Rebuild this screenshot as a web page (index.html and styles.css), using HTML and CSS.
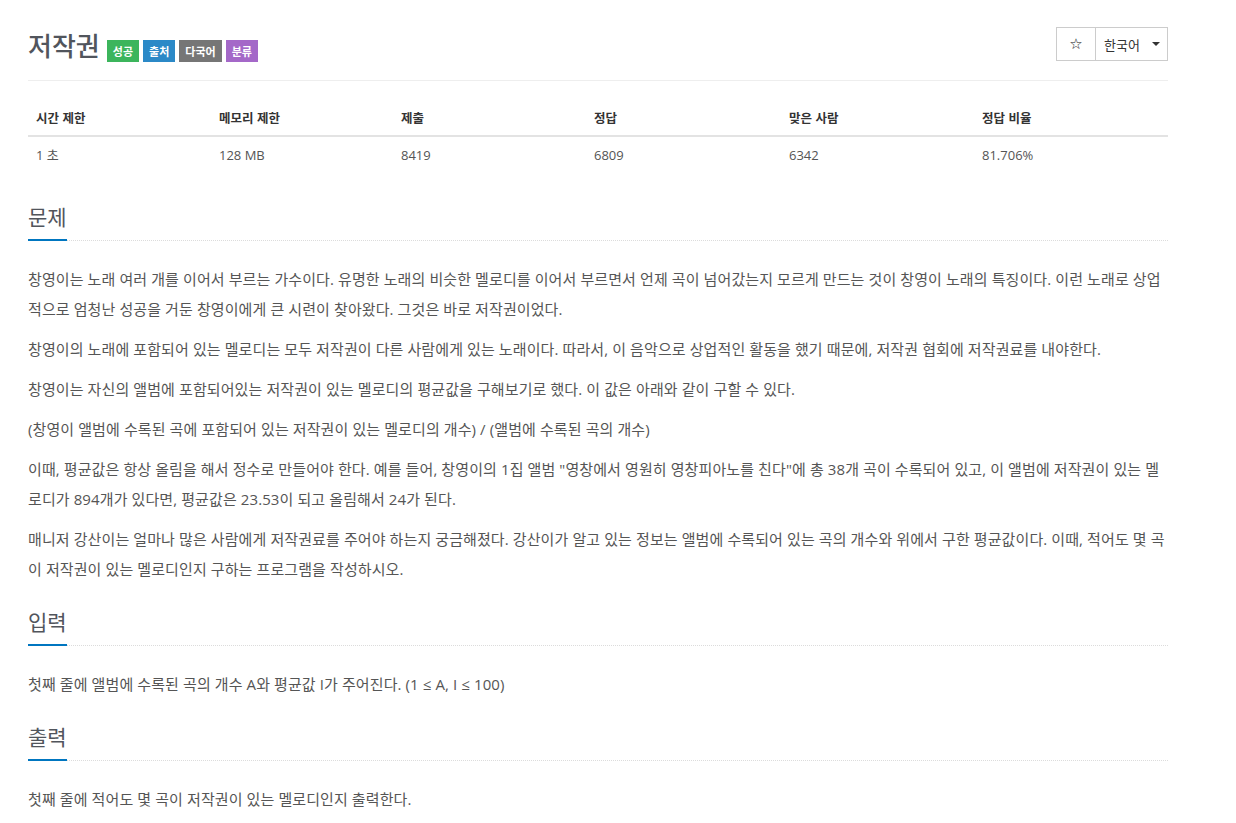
FILE: index.html
```html
<!DOCTYPE html>
<html lang="ko">
<head>
<meta charset="utf-8">
<title>저작권</title>
<link rel="stylesheet" href="styles.css">
</head>
<body>
<div class="page">
  <div class="page-header">
    <h1 class="title-line">
      <span class="title">저작권</span>
      <span class="badges">
        <span class="badge badge-green">성공</span>
        <span class="badge badge-blue">출처</span>
        <span class="badge badge-gray">다국어</span>
        <span class="badge badge-purple">분류</span>
      </span>
    </h1>
    <div class="btn-group">
      <button class="btn btn-star" type="button">☆</button>
      <button class="btn btn-lang" type="button">한국어 <span class="caret"></span></button>
    </div>
  </div>

  <table class="info-table">
    <thead>
      <tr>
        <th class="c1">시간 제한</th>
        <th class="c2">메모리 제한</th>
        <th class="c3">제출</th>
        <th class="c4">정답</th>
        <th class="c5">맞은 사람</th>
        <th class="c6">정답 비율</th>
      </tr>
    </thead>
    <tbody>
      <tr>
        <td>1 초 </td>
        <td>128 MB</td>
        <td>8419</td>
        <td>6809</td>
        <td>6342</td>
        <td>81.706%</td>
      </tr>
    </tbody>
  </table>

  <section class="problem-section first">
    <div class="headline"><h2>문제</h2></div>
    <div class="problem-text">
      <p>창영이는 노래 여러 개를 이어서 부르는 가수이다. 유명한 노래의 비슷한 멜로디를 이어서 부르면서 언제 곡이 넘어갔는지 모르게 만드는 것이 창영이 노래의 특징이다. 이런 노래로 상업적으로 엄청난 성공을 거둔 창영이에게 큰 시련이 찾아왔다. 그것은 바로 저작권이었다.</p>
      <p>창영이의 노래에 포함되어 있는 멜로디는 모두 저작권이 다른 사람에게 있는 노래이다. 따라서, 이 음악으로 상업적인 활동을 했기 때문에, 저작권 협회에 저작권료를 내야한다.</p>
      <p>창영이는 자신의 앨범에 포함되어있는 저작권이 있는 멜로디의 평균값을 구해보기로 했다. 이 값은 아래와 같이 구할 수 있다.</p>
      <p>(창영이 앨범에 수록된 곡에 포함되어 있는 저작권이 있는 멜로디의 개수) / (앨범에 수록된 곡의 개수)</p>
      <p>이때, 평균값은 항상 올림을 해서 정수로 만들어야 한다. 예를 들어, 창영이의 1집 앨범 "영창에서 영원히 영창피아노를 친다"에 총 38개 곡이 수록되어 있고, 이 앨범에 저작권이 있는 멜로디가 894개가 있다면, 평균값은 23.53이 되고 올림해서 24가 된다.</p>
      <p>매니저 강산이는 얼마나 많은 사람에게 저작권료를 주어야 하는지 궁금해졌다. 강산이가 알고 있는 정보는 앨범에 수록되어 있는 곡의 개수와 위에서 구한 평균값이다. 이때, 적어도 몇 곡이 저작권이 있는 멜로디인지 구하는 프로그램을 작성하시오.</p>
    </div>
  </section>

  <section class="problem-section">
    <div class="headline"><h2>입력</h2></div>
    <div class="problem-text">
      <p>첫째 줄에 앨범에 수록된 곡의 개수 A와 평균값 I가 주어진다. (1 ≤ A, I ≤ 100)</p>
    </div>
  </section>

  <section class="problem-section">
    <div class="headline"><h2>출력</h2></div>
    <div class="problem-text">
      <p>첫째 줄에 적어도 몇 곡이 저작권이 있는 멜로디인지 출력한다.</p>
    </div>
  </section>
</div>
</body>
</html>
```

FILE: styles.css
```css
* {
  box-sizing: border-box;
}

html, body {
  margin: 0;
  padding: 0;
  background: #ffffff;
}

body {
  font-family: "Open Sans", "Noto Sans CJK KR", sans-serif;
  color: #555555;
  font-size: 15px;
}

.page {
  width: 1140px;
  margin-left: 28px;
}

/* ---------- header ---------- */
.page-header {
  display: flex;
  justify-content: space-between;
  align-items: flex-start;
  padding-top: 27px;
  padding-bottom: 17px;
  border-bottom: 1px solid #eeeeee;
}

.title-line {
  display: flex;
  align-items: center;
  margin: 0;
  height: 36px;
  font-weight: normal;
}

.title {
  font-family: "Noto Sans CJK KR", sans-serif;
  font-size: 26px;
  line-height: 36px;
  color: #51555c;
  font-weight: 500;
}

.badges {
  display: flex;
  gap: 4px;
  margin-left: 7px;
  margin-top: 12px;
}

.badge {
  display: inline-block;
  height: 22px;
  line-height: 22px;
  padding: 0 6px;
  font-family: "Noto Sans CJK KR", sans-serif;
  font-size: 11px;
  font-weight: 700;
  color: #ffffff;
}

.badge-green { background: #3cb55c; }
.badge-blue { background: #2b89c7; }
.badge-gray { background: #767676; }
.badge-purple { background: #a468c8; }

.btn-group {
  display: flex;
  height: 34px;
}

.btn {
  background: #ffffff;
  border: 1px solid #cccccc;
  margin: 0;
  height: 34px;
  font-family: "Open Sans", "Noto Sans CJK KR", sans-serif;
  color: #333333;
  display: flex;
  align-items: center;
  justify-content: center;
  cursor: pointer;
}

.btn-star {
  width: 40px;
  font-family: "DejaVu Sans", sans-serif;
  font-size: 15px;
  color: #111111;
  padding: 0;
}

.btn-lang {
  width: 73px;
  margin-left: -1px;
  font-size: 13px;
  padding: 0 0 0 1px;
  gap: 12px;
}

.caret {
  display: inline-block;
  width: 0;
  height: 0;
  border-top: 4px solid #333333;
  border-left: 4px solid transparent;
  border-right: 4px solid transparent;
}

/* ---------- info table ---------- */
.info-table {
  width: 1140px;
  border-collapse: collapse;
  table-layout: fixed;
  margin-top: 19px;
}

.info-table th,
.info-table td {
  text-align: left;
  padding: 0 8px;
  height: 36px;
}

.info-table th {
  font-family: "Noto Sans CJK KR", sans-serif;
  font-size: 12.5px;
  font-weight: 700;
  color: #333333;
  border-bottom: 2px solid #e3e3e3;
}

.info-table td {
  font-size: 13px;
  color: #555555;
}

.c1 { width: 183px; }
.c2 { width: 182px; }
.c3 { width: 193px; }
.c4 { width: 195px; }
.c5 { width: 193px; }
.c6 { width: 194px; }

/* ---------- sections ---------- */
.problem-section {
  margin-top: 23px;
}

.problem-section.first {
  margin-top: 30px;
}

.headline {
  border-bottom: 1px dotted #dcdcdc;
}

.headline h2 {
  display: inline-block;
  margin: 0 0 -1px 0;
  padding: 0 0 9px 0;
  font-family: "Noto Sans CJK KR", sans-serif;
  font-size: 21px;
  line-height: 28px;
  font-weight: 400;
  color: #51555c;
  border-bottom: 2px solid #0076c0;
}

.problem-text {
  padding-top: 23px;
}

.problem-text p {
  margin: 0 0 10px 0;
  line-height: 30px;
  font-size: 15px;
  letter-spacing: 0.1px;
  color: #555555;
}
```
